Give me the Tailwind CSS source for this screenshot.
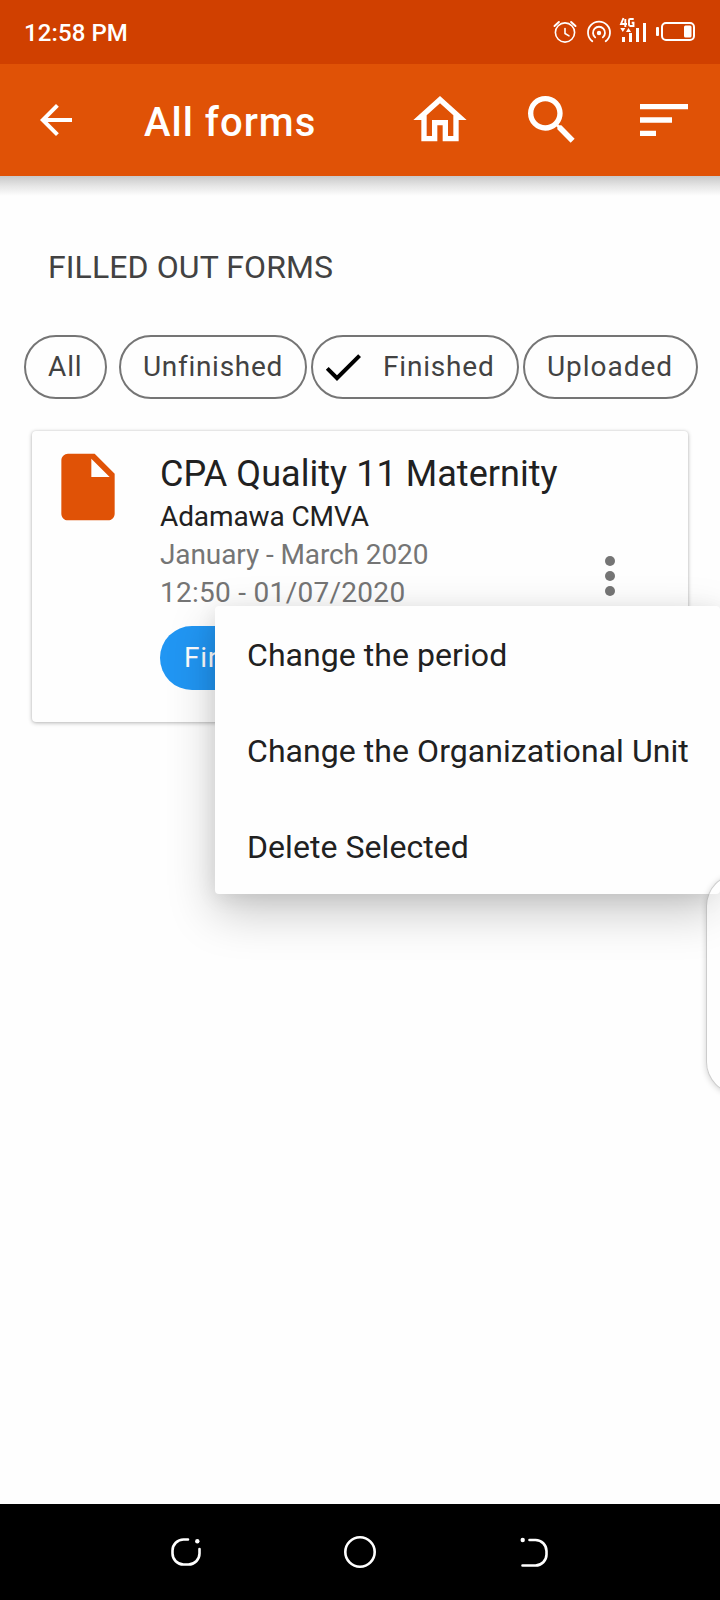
<!DOCTYPE html>
<html lang="en">
<head>
<meta charset="utf-8">
<meta name="viewport" content="width=device-width, initial-scale=1">
<title>All forms</title>
<script src="https://cdn.jsdelivr.net/npm/@tailwindcss/browser@4"></script>
</head>
<body class="relative flex h-[1600px] w-[720px] flex-col overflow-hidden bg-[#fefefe] font-['Roboto',sans-serif] text-[#212121] antialiased">

  <!-- Status bar -->
  <div class="flex h-16 shrink-0 bg-[#d04000] text-white">
    <span class="mt-[19px] ml-6 h-7 text-2xl leading-7 font-medium tracking-[0.1px]">12:58 PM</span>
    <svg class="ml-auto h-16 w-[180px]" viewBox="0 0 180 64" fill="none" stroke="#fff" stroke-linecap="round">
      <circle cx="25" cy="32.500" r="9.600" stroke-width="1.600"/>
      <path d="M25 28.500v5l4 2.400" stroke-width="1.600" stroke-linejoin="round"/>
      <path d="M14.500 26l4.400-4M35.500 26l-4.400-4" stroke-width="2"/>
      <circle cx="59" cy="33" r="2.200" fill="#fff" stroke="none"/>
      <path d="M55.200 37.400a6 6 0 1 1 7.600 0M52.300 41.300a11 11 0 1 1 13.400 0" stroke-width="1.800"/>
      <path d="M83.500 18l-2.500 6h6M85.300 19v8M93.700 19h-3.500q-1.200 0-1.200 1.200v4.600q0 1.200 1.200 1.200h3.300v-3.300h-1.800" stroke-width="1.900" stroke-linecap="butt"/>
      <path d="M80.300 28h5l-2.500 4zM86 32h5l-2.500-4zM82 37h3v5h-3zM89 33h3v9h-3zM96 28h3v14h-3zM103 23h3v19h-3z" fill="#fff" stroke="none"/>
      <rect x="122" y="23" width="32" height="17" rx="4" stroke-width="2"/>
      <rect x="144" y="25.500" width="7.500" height="12" rx="1.500" fill="#fff" stroke="none"/>
      <rect x="116" y="27" width="3" height="9" rx="1" fill="#fff" stroke="none"/>
    </svg>
  </div>

  <!-- App bar -->
  <header class="relative z-10 flex h-28 shrink-0 items-center bg-[#e05206] pr-6 pl-8 text-white">
    <svg class="size-12" viewBox="0 0 24 24" fill="currentColor"><path d="M20 11H7.830l5.590-5.590L12 4l-8 8 8 8 1.410-1.410L7.830 13H20v-2z"/></svg>
    <h1 class="mt-1.5 ml-16 text-[40px] leading-[48px] font-medium tracking-[1px]">All forms</h1>
    <div class="ml-auto flex gap-12">
      <svg class="size-16" viewBox="0 0 24 24" fill="currentColor"><path d="M12 5.690l5 4.500V18h-2v-6H9v6H7v-7.810l5-4.500M12 3L2 12h3v8h6v-6h2v6h6v-8h3L12 3z"/></svg>
      <svg class="size-16" viewBox="0 0 24 24" fill="currentColor"><path d="M15.500 14h-.79l-.28-.27A6.471 6.471 0 0 0 16 9.500 6.500 6.500 0 1 0 9.500 16c1.610 0 3.090-.59 4.230-1.570l.27.28v.79l5 4.990L20.490 19l-4.990-5zm-6 0C7.010 14 5 11.990 5 9.500S7.010 5 9.500 5 14 7.010 14 9.500 11.990 14 9.500 14z"/></svg>
      <svg class="size-16" viewBox="0 0 24 24" fill="currentColor"><path d="M3 18h6v-2H3v2zM3 6v2h18V6H3zm0 7h12v-2H3v2z"/></svg>
    </div>
  </header>
  <div class="h-5 shrink-0 bg-linear-to-b from-[#c9c9c9] via-[#e6e6e6] via-50% to-[#fefefe]"></div>

  <main class="flex grow flex-col">
    <h2 class="mt-[52px] ml-12 text-[32px] leading-[38px] tracking-[0.1px] text-[#424242]">FILLED OUT FORMS</h2>

    <div class="mt-[49px] ml-6 flex h-16 text-[28px] tracking-[0.7px] text-[#424242]">
      <div class="flex w-[83px] items-center rounded-full border-2 border-[#757575] pl-[22px] tracking-[0.9px]">All</div>
      <div class="ml-3 flex w-[188px] items-center rounded-full border-2 border-[#757575] pl-[22px]">Unfinished</div>
      <div class="ml-1 flex w-[208px] items-center rounded-full border-2 border-[#757575] pl-1.5">
        <svg class="size-12" viewBox="0 0 24 24" fill="#000"><path d="M9 16.170L4.830 12l-1.420 1.410L9 19 21 7l-1.410-1.410z"/></svg>
        <span class="ml-4 tracking-[0.8px]">Finished</span>
      </div>
      <div class="ml-1 flex w-[175px] items-center rounded-full border-2 border-[#757575] pl-[22px] tracking-[0.95px]">Uploaded</div>
    </div>

    <article class="mx-8 mt-8 flex h-[291px] rounded bg-[#fefefe] shadow-[0_1px_4px_rgba(0,0,0,0.28),0_0_2px_rgba(0,0,0,0.1)]">
      <svg class="mt-[15.500px] ml-4 size-20" viewBox="0 0 24 24" fill="#e05206"><path d="M6 2c-1.100 0-1.990.9-1.990 2L4 20c0 1.100.89 2 1.990 2H18c1.100 0 2-.9 2-2V8l-6-6H6zm7 7V3.500L18.500 9H13z"/></svg>
      <div class="ml-8 flex flex-col">
        <h3 class="mt-[22px] text-[36px] leading-[43px] tracking-[0.05px]">CPA Quality 11 Maternity</h3>
        <p class="mt-0.5 text-[28px] leading-[38px] tracking-[-0.1px]">Adamawa CMVA</p>
        <p class="text-[28px] leading-[38px] tracking-[-0.1px] text-[#757575]">January - March 2020</p>
        <p class="text-[28px] leading-[38px] tracking-[0.28px] text-[#757575]">12:50 - 01/07/2020</p>
        <div class="mt-3.5 flex h-16 w-[160px] items-center rounded-full bg-[#2196f3] pl-6 text-[28px] tracking-[0.7px] text-white">Finished</div>
      </div>
      <svg class="mt-[115px] mr-12 ml-auto size-[60px]" viewBox="0 0 24 24" fill="#757575"><circle cx="12" cy="6" r="2"/><circle cx="12" cy="12" r="2"/><circle cx="12" cy="18" r="2"/></svg>
    </article>
  </main>

  <!-- Context menu -->
  <ul class="absolute top-[606px] left-[215px] w-[505px] rounded bg-[#fefefe] text-[32px] tracking-[0.06px] shadow-[0_18px_48px_rgba(0,0,0,0.22),0_4px_20px_rgba(0,0,0,0.08)]">
    <li class="flex h-24 items-center pt-0.5 pl-8">Change the period</li>
    <li class="flex h-24 items-center pt-0.5 pl-8 whitespace-nowrap">Change the Organizational Unit</li>
    <li class="flex h-24 items-center pt-0.5 pl-8">Delete Selected</li>
  </ul>

  <!-- Edge panel handle -->
  <div class="absolute top-[874px] left-[706px] h-[220px] w-16 rounded-[32px] border border-black/20 bg-white/45 shadow-[0_1px_6px_rgba(0,0,0,0.18)]"></div>

  <!-- Navigation bar -->
  <nav class="h-24 shrink-0 bg-black">
    <svg class="h-24 w-[720px]" viewBox="0 0 720 96" fill="none" stroke="#fff" stroke-width="2.600" stroke-linecap="round">
      <path d="M188 35.500h-4.500a11 11 0 0 0-11 11v3a11 11 0 0 0 11 11h5a11 11 0 0 0 11-11v-4.500"/>
      <circle cx="197.300" cy="37.300" r="2.200" fill="#fff" stroke="none"/>
      <circle cx="360" cy="48" r="14.700"/>
      <path d="M529.500 36h6a11 11 0 0 1 11 11v3.500a11 11 0 0 1-11 11h-13"/>
      <circle cx="522.700" cy="36" r="2.200" fill="#fff" stroke="none"/>
    </svg>
  </nav>
</body>
</html>
